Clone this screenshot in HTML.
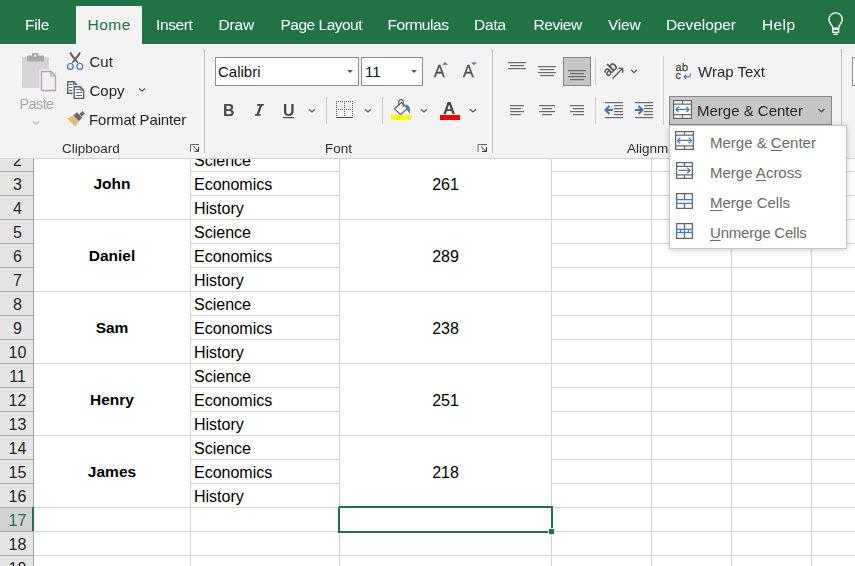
<!DOCTYPE html>
<html><head><meta charset="utf-8">
<style>
*{box-sizing:border-box}
html,body{margin:0;padding:0}
body{width:855px;height:566px;overflow:hidden;position:relative;background:#fff;font-family:"Liberation Sans",sans-serif;color:#262626}
.a{position:absolute}
.t{position:absolute;white-space:nowrap;line-height:1}
.g,.tab,.btn,.lbl{filter:grayscale(1)}
#tabs{left:0;top:0;width:855px;height:44px;background:#217346}
.tab{font-size:15.5px;color:#fff;top:17px;letter-spacing:-0.2px}
#home{left:76px;top:6px;width:66px;height:38px;background:#f3f3f3}
#ribbon{left:0;top:44px;width:855px;height:114px;background:#f3f3f3}
#rbline{left:0;top:158px;width:855px;height:1px;background:#d2d2d2}
.sep{position:absolute;width:1px;background:#c6c6c6}
.lbl{font-size:13.5px;color:#303030}
.btn{font-size:15px;color:#262626}
.cell{font-size:16px;color:#000}
.rn{font-size:16px;color:#3f3f3f;width:33px;text-align:center}
.mi{font-size:15px;color:#6a6a6a}
.mi u{text-decoration-thickness:1px;text-underline-offset:2px}
.gv{position:absolute;width:1px;background:#d4d4d4}
.gh{position:absolute;height:1px;background:#d4d4d4}
</style></head><body>

<!-- SHEET -->
<div id="sheet">
<svg class="a" style="left:0;top:0" width="855" height="566">
<rect x="0" y="159" width="33" height="407" fill="#e6e6e6"/>
<rect x="0" y="507" width="33" height="24" fill="#d2d2d2"/>
<rect x="190" y="159" width="1" height="407" fill="#d4d4d4"/>
<rect x="339" y="159" width="1" height="407" fill="#d4d4d4"/>
<rect x="551" y="159" width="1" height="407" fill="#d4d4d4"/>
<rect x="651" y="159" width="1" height="407" fill="#d4d4d4"/>
<rect x="731" y="159" width="1" height="407" fill="#d4d4d4"/>
<rect x="811" y="159" width="1" height="407" fill="#d4d4d4"/>
<rect x="0" y="171" width="33" height="1" fill="#a8a8a8"/>
<rect x="190" y="171" width="149" height="1" fill="#d4d4d4"/>
<rect x="551" y="171" width="304" height="1" fill="#d4d4d4"/>
<rect x="0" y="195" width="33" height="1" fill="#a8a8a8"/>
<rect x="190" y="195" width="149" height="1" fill="#d4d4d4"/>
<rect x="551" y="195" width="304" height="1" fill="#d4d4d4"/>
<rect x="0" y="219" width="33" height="1" fill="#a8a8a8"/>
<rect x="34" y="219" width="156" height="1" fill="#d4d4d4"/>
<rect x="190" y="219" width="149" height="1" fill="#d4d4d4"/>
<rect x="339" y="219" width="212" height="1" fill="#d4d4d4"/>
<rect x="551" y="219" width="304" height="1" fill="#d4d4d4"/>
<rect x="0" y="243" width="33" height="1" fill="#a8a8a8"/>
<rect x="190" y="243" width="149" height="1" fill="#d4d4d4"/>
<rect x="551" y="243" width="304" height="1" fill="#d4d4d4"/>
<rect x="0" y="267" width="33" height="1" fill="#a8a8a8"/>
<rect x="190" y="267" width="149" height="1" fill="#d4d4d4"/>
<rect x="551" y="267" width="304" height="1" fill="#d4d4d4"/>
<rect x="0" y="291" width="33" height="1" fill="#a8a8a8"/>
<rect x="34" y="291" width="156" height="1" fill="#d4d4d4"/>
<rect x="190" y="291" width="149" height="1" fill="#d4d4d4"/>
<rect x="339" y="291" width="212" height="1" fill="#d4d4d4"/>
<rect x="551" y="291" width="304" height="1" fill="#d4d4d4"/>
<rect x="0" y="315" width="33" height="1" fill="#a8a8a8"/>
<rect x="190" y="315" width="149" height="1" fill="#d4d4d4"/>
<rect x="551" y="315" width="304" height="1" fill="#d4d4d4"/>
<rect x="0" y="339" width="33" height="1" fill="#a8a8a8"/>
<rect x="190" y="339" width="149" height="1" fill="#d4d4d4"/>
<rect x="551" y="339" width="304" height="1" fill="#d4d4d4"/>
<rect x="0" y="363" width="33" height="1" fill="#a8a8a8"/>
<rect x="34" y="363" width="156" height="1" fill="#d4d4d4"/>
<rect x="190" y="363" width="149" height="1" fill="#d4d4d4"/>
<rect x="339" y="363" width="212" height="1" fill="#d4d4d4"/>
<rect x="551" y="363" width="304" height="1" fill="#d4d4d4"/>
<rect x="0" y="387" width="33" height="1" fill="#a8a8a8"/>
<rect x="190" y="387" width="149" height="1" fill="#d4d4d4"/>
<rect x="551" y="387" width="304" height="1" fill="#d4d4d4"/>
<rect x="0" y="411" width="33" height="1" fill="#a8a8a8"/>
<rect x="190" y="411" width="149" height="1" fill="#d4d4d4"/>
<rect x="551" y="411" width="304" height="1" fill="#d4d4d4"/>
<rect x="0" y="435" width="33" height="1" fill="#a8a8a8"/>
<rect x="34" y="435" width="156" height="1" fill="#d4d4d4"/>
<rect x="190" y="435" width="149" height="1" fill="#d4d4d4"/>
<rect x="339" y="435" width="212" height="1" fill="#d4d4d4"/>
<rect x="551" y="435" width="304" height="1" fill="#d4d4d4"/>
<rect x="0" y="459" width="33" height="1" fill="#a8a8a8"/>
<rect x="190" y="459" width="149" height="1" fill="#d4d4d4"/>
<rect x="551" y="459" width="304" height="1" fill="#d4d4d4"/>
<rect x="0" y="483" width="33" height="1" fill="#a8a8a8"/>
<rect x="190" y="483" width="149" height="1" fill="#d4d4d4"/>
<rect x="551" y="483" width="304" height="1" fill="#d4d4d4"/>
<rect x="0" y="507" width="33" height="1" fill="#a8a8a8"/>
<rect x="34" y="507" width="156" height="1" fill="#d4d4d4"/>
<rect x="190" y="507" width="149" height="1" fill="#d4d4d4"/>
<rect x="339" y="507" width="212" height="1" fill="#d4d4d4"/>
<rect x="551" y="507" width="304" height="1" fill="#d4d4d4"/>
<rect x="0" y="531" width="33" height="1" fill="#a8a8a8"/>
<rect x="34" y="531" width="156" height="1" fill="#d4d4d4"/>
<rect x="190" y="531" width="149" height="1" fill="#d4d4d4"/>
<rect x="339" y="531" width="212" height="1" fill="#d4d4d4"/>
<rect x="551" y="531" width="304" height="1" fill="#d4d4d4"/>
<rect x="0" y="555" width="33" height="1" fill="#a8a8a8"/>
<rect x="34" y="555" width="156" height="1" fill="#d4d4d4"/>
<rect x="190" y="555" width="149" height="1" fill="#d4d4d4"/>
<rect x="339" y="555" width="212" height="1" fill="#d4d4d4"/>
<rect x="551" y="555" width="304" height="1" fill="#d4d4d4"/>
<rect x="33" y="159" width="1" height="407" fill="#a0a0a0"/>
<rect x="32" y="507" width="2" height="24" fill="#217346"/>
<path d="M339 507 H552 V528 M548 532 H339 V507" fill="none" stroke="#217346" stroke-width="2"/>
<rect x="549" y="529" width="5" height="5" fill="#217346"/>
</svg>
<div class="t rn" style="left:1px;top:153px;color:#262626">2</div>
<div class="t rn" style="left:1px;top:177px;color:#262626">3</div>
<div class="t rn" style="left:1px;top:201px;color:#262626">4</div>
<div class="t rn" style="left:1px;top:225px;color:#262626">5</div>
<div class="t rn" style="left:1px;top:249px;color:#262626">6</div>
<div class="t rn" style="left:1px;top:273px;color:#262626">7</div>
<div class="t rn" style="left:1px;top:297px;color:#262626">8</div>
<div class="t rn" style="left:1px;top:321px;color:#262626">9</div>
<div class="t rn" style="left:1px;top:345px;color:#262626">10</div>
<div class="t rn" style="left:1px;top:369px;color:#262626">11</div>
<div class="t rn" style="left:1px;top:393px;color:#262626">12</div>
<div class="t rn" style="left:1px;top:417px;color:#262626">13</div>
<div class="t rn" style="left:1px;top:441px;color:#262626">14</div>
<div class="t rn" style="left:1px;top:465px;color:#262626">15</div>
<div class="t rn" style="left:1px;top:489px;color:#262626">16</div>
<div class="t rn" style="left:1px;top:513px;color:#217346">17</div>
<div class="t rn" style="left:1px;top:537px;color:#262626">18</div>
<div class="t rn" style="left:1px;top:561px;color:#262626">19</div>
<div class="t cell" style="left:34px;width:156px;text-align:center;top:176px;font-weight:bold;font-size:15.5px">John</div>
<div class="t cell" style="left:340px;width:211px;text-align:center;top:177px">261</div>
<div class="t cell" style="left:194px;top:153px">Science</div>
<div class="t cell" style="left:194px;top:177px">Economics</div>
<div class="t cell" style="left:194px;top:201px">History</div>
<div class="t cell" style="left:34px;width:156px;text-align:center;top:248px;font-weight:bold;font-size:15.5px">Daniel</div>
<div class="t cell" style="left:340px;width:211px;text-align:center;top:249px">289</div>
<div class="t cell" style="left:194px;top:225px">Science</div>
<div class="t cell" style="left:194px;top:249px">Economics</div>
<div class="t cell" style="left:194px;top:273px">History</div>
<div class="t cell" style="left:34px;width:156px;text-align:center;top:320px;font-weight:bold;font-size:15.5px">Sam</div>
<div class="t cell" style="left:340px;width:211px;text-align:center;top:321px">238</div>
<div class="t cell" style="left:194px;top:297px">Science</div>
<div class="t cell" style="left:194px;top:321px">Economics</div>
<div class="t cell" style="left:194px;top:345px">History</div>
<div class="t cell" style="left:34px;width:156px;text-align:center;top:392px;font-weight:bold;font-size:15.5px">Henry</div>
<div class="t cell" style="left:340px;width:211px;text-align:center;top:393px">251</div>
<div class="t cell" style="left:194px;top:369px">Science</div>
<div class="t cell" style="left:194px;top:393px">Economics</div>
<div class="t cell" style="left:194px;top:417px">History</div>
<div class="t cell" style="left:34px;width:156px;text-align:center;top:464px;font-weight:bold;font-size:15.5px">James</div>
<div class="t cell" style="left:340px;width:211px;text-align:center;top:465px">218</div>
<div class="t cell" style="left:194px;top:441px">Science</div>
<div class="t cell" style="left:194px;top:465px">Economics</div>
<div class="t cell" style="left:194px;top:489px">History</div>
</div>
<!-- TAB BAR -->
<div id="tabs" class="a"></div>
<div id="home" class="a"></div>
<div class="t tab" style="left:25px">File</div>
<div class="t tab" style="left:87.5px;color:#217346;letter-spacing:0.5px;filter:none">Home</div>
<div class="t tab" style="left:156px;letter-spacing:-0.4px">Insert</div>
<div class="t tab" style="left:218.5px">Draw</div>
<div class="t tab" style="left:280.5px;letter-spacing:-0.5px">Page Layout</div>
<div class="t tab" style="left:387.5px;letter-spacing:-0.45px">Formulas</div>
<div class="t tab" style="left:474px">Data</div>
<div class="t tab" style="left:533.5px;letter-spacing:-0.45px">Review</div>
<div class="t tab" style="left:608px">View</div>
<div class="t tab" style="left:666px;letter-spacing:-0.1px">Developer</div>
<div class="t tab" style="left:762px;letter-spacing:0.4px">Help</div>

<svg class="a" style="left:0;top:0" width="855" height="44">
 <path d="M832.8 28.3 C832.8 25 828.9 23.2 828.9 19.6 A6.7 6.7 0 0 1 842.3 19.6 C842.3 23.2 838.6 25 838.6 28.3 Z" fill="none" stroke="#fff" stroke-width="1.4"/>
 <rect x="832.8" y="29.3" width="5.8" height="3" fill="none" stroke="#fff" stroke-width="1.3"/>
 <rect x="833.3" y="33.6" width="4.8" height="1.2" fill="#fff"/>
</svg>
<!-- RIBBON -->
<div id="ribbon" class="a"></div>
<div id="rbline" class="a"></div>


<!-- RIBBON ICONS -->
<svg class="a" style="left:0;top:0" width="855" height="566" shape-rendering="geometricPrecision">
 <!-- separators -->
 <rect x="204" y="49" width="1" height="104" fill="#bfbfbf"/>
 <rect x="492" y="49" width="1" height="104" fill="#bfbfbf"/>
 <rect x="841" y="49" width="1" height="104" fill="#bfbfbf"/>
 <!-- Paste -->
 <rect x="22" y="57" width="27" height="31" rx="1.5" fill="#d7d4d7"/>
 <rect x="27" y="55.5" width="17" height="6" rx="1" fill="#a9a9a9"/>
 <rect x="32" y="53" width="6.5" height="4" rx="1" fill="#a9a9a9"/>
 <rect x="34.3" y="54.6" width="2" height="2" fill="#f3f3f3"/>
 <rect x="39.5" y="69.5" width="18" height="23" fill="#f3f3f3"/>
 <path d="M41.5 71.5 H51 L55.5 76 V90.5 H41.5 Z" fill="#f4eff4" stroke="#a9a9a9" stroke-width="1.4"/>
 <path d="M51 71.5 V76 H55.5" fill="none" stroke="#a9a9a9" stroke-width="1.2"/>
 <path d="M33 121.5 L36 124 L39 121.5" fill="none" stroke="#b8b8b8" stroke-width="1.2"/>
 <!-- Cut -->
 <path d="M69.3 52.8 L70.9 52 L73.2 55.2 L78.5 62.4 L77.4 63.3 L71.3 56.4 Z" fill="#5e5e5e"/><path d="M80.9 52.8 L79.3 52 L77 55.2 L71.7 62.4 L72.8 63.3 L78.9 56.4 Z" fill="#5e5e5e"/>
 <circle cx="70.4" cy="66.4" r="2.9" fill="none" stroke="#3f77ba" stroke-width="1.2"/>
 <circle cx="79.8" cy="66.4" r="2.9" fill="none" stroke="#3f77ba" stroke-width="1.2"/>
 <!-- Copy -->
 <path d="M67.7 81.7 H73.6 L76.8 84.9 V93.3 H67.7 Z" fill="#fff" stroke="#5e5e5e" stroke-width="1.4"/>
 <path d="M73.6 81.7 V84.9 H76.8" fill="none" stroke="#5e5e5e" stroke-width="1"/>
 <path d="M69 84.5 h3.5 M69 87.5 h3.5 M69 90.5 h3.5" stroke="#3d72b3" stroke-width="1.1"/>
 <rect x="72.6" y="85" width="12.6" height="15" fill="#f3f3f3"/>
 <path d="M74.2 86.7 H80.1 L83.6 90.2 V98.4 H74.2 Z" fill="#fff" stroke="#5e5e5e" stroke-width="1.4"/>
 <path d="M80.1 86.7 V90.2 H83.6" fill="none" stroke="#5e5e5e" stroke-width="1"/>
 <path d="M76 89.5 h3.5 M76 92.5 h6 M76 95.5 h6" stroke="#3d72b3" stroke-width="1.1"/>
 <path d="M139 88.5 L142 91 L145 88.5" fill="none" stroke="#555" stroke-width="1.2"/>
 <!-- Format painter -->
 <path d="M67.2 118.4 L73.2 115.8 L78.8 121.6 L75.2 126.6 Z" fill="#e4bb74"/>
 <path d="M73.4 115.6 L77 112.2 L82.2 117.4 L78.8 121.2 Z" fill="#686868"/>
 <path d="M79.4 114 L82.4 111 L84.8 113.4 L81.8 116.4 Z" fill="#686868"/>
 <!-- launcher clipboard -->
 <path d="M190.5 151.8 V144.5 H199" fill="none" stroke="#666" stroke-width="1"/>
 <path d="M193.3 146.3 L198.2 151.2 M194.4 151.3 H198.5 V147" fill="none" stroke="#333" stroke-width="1"/>
</svg>
<div class="t g" style="left:19.5px;top:96.5px;font-size:14.5px;letter-spacing:-0.6px;color:#a6a6a6">Paste</div>
<div class="t btn" style="left:89.5px;top:54px">Cut</div>
<div class="t btn" style="left:89.5px;top:83px">Copy</div>
<div class="t btn" style="left:89px;top:112px;letter-spacing:-0.15px">Format Painter</div>
<div class="t lbl" style="left:62px;top:142px">Clipboard</div>


<!-- FONT GROUP -->
<svg class="a" style="left:0;top:0" width="855" height="566">
 <rect x="215.5" y="57.5" width="143" height="28" fill="#fff" stroke="#8d8d8d"/>
 <path d="M347 70 H353 L350 73 Z" fill="#5a5a5a"/>
 <rect x="361.5" y="57.5" width="61" height="28" fill="#fff" stroke="#8d8d8d"/>
 <path d="M411 70 H417 L414 73 Z" fill="#5a5a5a"/>
 <path d="M442 64.8 L445 62 L448 64.8 Z" fill="#3f7dc0"/>
 <path d="M471 62.5 L477 62.5 L474 65.3 Z" fill="#3f7dc0"/>
 <!-- I -->
 <path d="M257.3 104.1 H264 L263.6 105.8 H262 L259 114 H260.8 L260.4 115.8 H254.8 L255.2 114 H256.6 L259.6 105.8 H257 Z" fill="#4a4a4a"/>
 <rect x="283" y="117" width="11" height="1.2" fill="#4a4a4a"/>
 <path d="M309 109.2 L312 112 L315 109.2" fill="none" stroke="#555" stroke-width="1.2"/>
 <rect x="326" y="97" width="1" height="27" fill="#c8c8c8"/>
 <!-- borders -->
 <g fill="#555">
  <path d="M336 101h1v1h-1zM338 101h1v1h-1zM340 101h1v1h-1zM342 101h1v1h-1zM344 101h1v1h-1zM346 101h1v1h-1zM348 101h1v1h-1zM350 101h1v1h-1zM352 101h1v1h-1z"/>
  <path d="M336 109h1v1h-1zM338 109h1v1h-1zM340 109h1v1h-1zM342 109h1v1h-1zM344 109h1v1h-1zM346 109h1v1h-1zM348 109h1v1h-1zM350 109h1v1h-1zM352 109h1v1h-1z"/>
  <path d="M336 103h1v1h-1zM336 105h1v1h-1zM336 107h1v1h-1zM336 111h1v1h-1zM336 113h1v1h-1zM336 115h1v1h-1z"/>
  <path d="M344 103h1v1h-1zM344 105h1v1h-1zM344 107h1v1h-1zM344 111h1v1h-1zM344 113h1v1h-1zM344 115h1v1h-1z"/>
  <path d="M352 103h1v1h-1zM352 105h1v1h-1zM352 107h1v1h-1zM352 111h1v1h-1zM352 113h1v1h-1zM352 115h1v1h-1z"/>
  <rect x="336" y="117" width="17" height="1"/>
 </g>
 <path d="M365 109.2 L368 112 L371 109.2" fill="none" stroke="#555" stroke-width="1.2"/>
 <rect x="382" y="97" width="1" height="27" fill="#c8c8c8"/>
 <!-- fill bucket -->
 <path d="M401.5 102.5 L407.5 108.5 L400.5 114.5 L394.5 108.8 Z" fill="#fff" stroke="#5a5a5a" stroke-width="1.1"/>
 <path d="M398.8 106 V101.8 A2.2 2.2 0 0 1 403.2 101.8 V107" fill="none" stroke="#5a5a5a" stroke-width="1.1"/>
 <path d="M405.5 104.5 C409 104.5 411 108 409.6 114.2 C408.6 112 407.4 110.5 406.8 109.6 Z" fill="#3f7dc0"/>
 <rect x="391" y="115" width="20" height="5" fill="#ffff00"/>
 <path d="M421 109.2 L424 112 L427 109.2" fill="none" stroke="#555" stroke-width="1.2"/>
 <!-- font color -->
 <rect x="440" y="115" width="20" height="5" fill="#f00000"/>
 <path d="M470 109.2 L473 112 L476 109.2" fill="none" stroke="#555" stroke-width="1.2"/>
 <!-- launcher font -->
 <path d="M478 152 V144.5 H487" fill="none" stroke="#666" stroke-width="1"/>
 <path d="M481 146.5 L486 151.3 M482 151.5 H486.5 V147" fill="none" stroke="#333" stroke-width="1"/>
</svg>
<div class="t" style="left:218px;top:63.5px;font-size:15px;color:#111">Calibri</div>
<div class="t" style="left:365px;top:63.5px;font-size:15px;color:#111">11</div>
<div class="t g" style="left:434px;top:63.5px;font-size:16px;color:#4f4f4f;-webkit-text-stroke:0.35px #4f4f4f">A</div>
<div class="t g" style="left:463px;top:63.5px;font-size:16px;color:#4f4f4f;-webkit-text-stroke:0.35px #4f4f4f">A</div>
<div class="t g" style="left:223px;top:103px;font-size:16px;font-weight:bold;color:#4a4a4a">B</div>
<div class="t g" style="left:283px;top:103px;font-size:16px;font-weight:bold;color:#4a4a4a">U</div>
<div class="t g" style="left:443px;top:100px;font-size:17px;font-weight:bold;color:#444">A</div>
<div class="t lbl" style="left:325px;top:142px">Font</div>


<!-- ALIGNMENT GROUP -->
<svg class="a" style="left:0;top:0" width="855" height="566">
 <g fill="#6b6b6b">
  <!-- top align -->
  <rect x="508" y="62" width="18" height="1.2"/><rect x="510" y="65" width="14" height="1.2"/><rect x="508" y="68" width="18" height="1.2"/>
  <!-- middle align -->
  <rect x="538" y="66" width="18" height="1.2"/><rect x="540" y="69" width="14" height="1.2"/><rect x="538" y="72" width="18" height="1.2"/><rect x="540" y="75" width="14" height="1.2"/>
 </g>
 <!-- bottom align selected -->
 <rect x="563.5" y="57.5" width="27" height="28" fill="#c6c6c6" stroke="#868686"/>
 <g fill="#6b6b6b">
  <rect x="568" y="70" width="18" height="1.2"/><rect x="570" y="73" width="14" height="1.2"/><rect x="568" y="76" width="18" height="1.2"/><rect x="570" y="79" width="14" height="1.2"/>
 </g>
 <rect x="595" y="58" width="1" height="27" fill="#cfcfcf"/>
 <!-- orientation -->
 
 <path d="M612.5 78.5 L622.5 68.5 M618.3 68.3 H622.7 V72.7" fill="none" stroke="#555" stroke-width="1.3"/>
 <path d="M631 69.8 L634 72.6 L637 69.8" fill="none" stroke="#555" stroke-width="1.2"/>
 <g fill="#6b6b6b">
  <!-- left align -->
  <rect x="510" y="105" width="14" height="1.2"/><rect x="510" y="108" width="11" height="1.2"/><rect x="510" y="111" width="14" height="1.2"/><rect x="510" y="114" width="11" height="1.2"/>
  <!-- center -->
  <rect x="539" y="105" width="16" height="1.2"/><rect x="542" y="108" width="10" height="1.2"/><rect x="539" y="111" width="16" height="1.2"/><rect x="542" y="114" width="10" height="1.2"/>
  <!-- right -->
  <rect x="570" y="105" width="14" height="1.2"/><rect x="573" y="108" width="11" height="1.2"/><rect x="570" y="111" width="14" height="1.2"/><rect x="573" y="114" width="11" height="1.2"/>
 </g>
 <rect x="595" y="97" width="1" height="27" fill="#cfcfcf"/>
 <g fill="#6b6b6b">
  <rect x="605" y="102" width="18" height="1.2"/><rect x="614" y="105" width="9" height="1.2"/><rect x="614" y="108" width="9" height="1.2"/><rect x="614" y="111" width="9" height="1.2"/><rect x="614" y="114" width="9" height="1.2"/><rect x="605" y="117" width="18" height="1.2"/>
  <rect x="635" y="102" width="18" height="1.2"/><rect x="644" y="105" width="9" height="1.2"/><rect x="644" y="108" width="9" height="1.2"/><rect x="644" y="111" width="9" height="1.2"/><rect x="644" y="114" width="9" height="1.2"/><rect x="635" y="117" width="18" height="1.2"/>
 </g>
 <path d="M609.5 106 L605.5 110 L609.5 114 M605.8 110 H613" fill="none" stroke="#3d72b3" stroke-width="2"/>
 <path d="M638.5 106 L642.5 110 L638.5 114 M635 110 H642.2" fill="none" stroke="#3d72b3" stroke-width="2"/>
 <rect x="663" y="56" width="1" height="69" fill="#cfcfcf"/>
 <!-- wrap text icon -->
 
 
 <path d="M690.3 73.5 V75.3 Q690.3 76.8 688.8 76.8 H684 M686 74.8 L684 76.8 L686 78.8" fill="none" stroke="#3f7dc0" stroke-width="1.2"/>
 <!-- merge & center button -->
 <rect x="669.5" y="96.5" width="162" height="28" fill="#c6c6c6" stroke="#8a8a8a"/>
 <g fill="none" stroke="#666" stroke-width="1.2">
  <rect x="673.6" y="100.6" width="17.8" height="17.8" fill="#fff"/>
  <path d="M673.6 104.2 H691.4 M673.6 114.6 H691.4 M682.5 100.6 V104.2 M682.5 114.6 V118.4"/>
 </g>
 <path d="M676 109.4 H689 M678.6 106.8 L676 109.4 L678.6 112 M686.4 106.8 L689 109.4 L686.4 112" fill="none" stroke="#3f7dc0" stroke-width="1.3"/>
 <path d="M818.5 109 L821.5 112 L824.5 109" fill="none" stroke="#444" stroke-width="1.2"/>
 <!-- number format box (cut) -->
 <rect x="852.5" y="57.5" width="10" height="28" fill="#fff" stroke="#8d8d8d"/>
</svg>
<svg class="a" style="left:600px;top:58px;filter:grayscale(1)" width="24" height="24"><text x="0" y="0" transform="translate(8,19) rotate(-45)" font-family="Liberation Sans" font-size="13" fill="#555" stroke="#555" stroke-width="0.5">ab</text></svg>
<svg class="a" style="left:670px;top:58px;filter:grayscale(1)" width="24" height="24"><text x="5.5" y="12.6" font-family="Liberation Sans" font-size="11" letter-spacing="0.3" fill="#555" stroke="#555" stroke-width="0.35">ab</text><text x="5.6" y="21" font-family="Liberation Sans" font-size="11" fill="#555" stroke="#555" stroke-width="0.35">c</text></svg>
<div class="t btn" style="left:698px;top:64px">Wrap Text</div>
<div class="t btn" style="left:697px;top:102.5px">Merge &amp; Center</div>
<div class="t lbl" style="left:627px;top:142px">Alignment</div>

<!-- SHEET -->



<!-- MENU -->
<div class="a" style="left:669px;top:125px;width:178px;height:124px;background:#fff;border:1px solid #c6c6c6;box-shadow:0 1px 6px rgba(0,0,0,0.2)"></div>
<svg class="a" style="left:0;top:0" width="855" height="566">
 <g fill="none" stroke="#686868" stroke-width="1.3">
  <rect x="675.6" y="131.6" width="17.8" height="17.8"/>
  <path d="M675.6 135.2 H693.4 M675.6 145.8 H693.4 M684.5 131.6 V135.2 M684.5 145.8 V149.4"/>
  <rect x="676.6" y="162.6" width="15.8" height="15.8"/>
  <path d="M676.6 166.3 H692.4 M676.6 174.8 H692.4 M684.5 162.6 V166.3 M684.5 174.8 V178.4"/>
  <rect x="676.6" y="193.6" width="15.8" height="14.8"/>
  <path d="M684.5 193.6 V199.4 M684.5 203.6 V208.4"/>
  <rect x="676.6" y="223.6" width="15.8" height="14.8"/>
  <path d="M684.5 223.6 V229.4 M684.5 232.6 V238.4"/>
 </g>
 <path d="M677.5 140.4 H691.5 M680.3 137.6 L677.5 140.4 L680.3 143.2 M688.7 137.6 L691.5 140.4 L688.7 143.2" fill="none" stroke="#3f7dc0" stroke-width="1.3"/>
 <path d="M679 170.4 H690 M687.2 167.6 L690 170.4 L687.2 173.2" fill="none" stroke="#3f7dc0" stroke-width="1.3"/>
 <rect x="676.7" y="199.6" width="15.6" height="3.8" fill="#fff" stroke="#3f7dc0" stroke-width="1.3"/>
 <rect x="676.7" y="229.3" width="15.6" height="3.2" fill="#fff" stroke="#3f7dc0" stroke-width="1.3"/>
 <path d="M680.6 229 V233 M684.5 229 V233 M688.4 229 V233" stroke="#3f7dc0" stroke-width="1.1"/>
</svg>
<div class="t mi" style="left:710px;top:135px">Merge &amp; <u>C</u>enter</div>
<div class="t mi" style="left:710px;top:165px">Merge <u>A</u>cross</div>
<div class="t mi" style="left:710px;top:195px"><u>M</u>erge Cells</div>
<div class="t mi" style="left:710px;top:225px;letter-spacing:-0.2px"><u>U</u>nmerge Cells</div>

</body></html>
